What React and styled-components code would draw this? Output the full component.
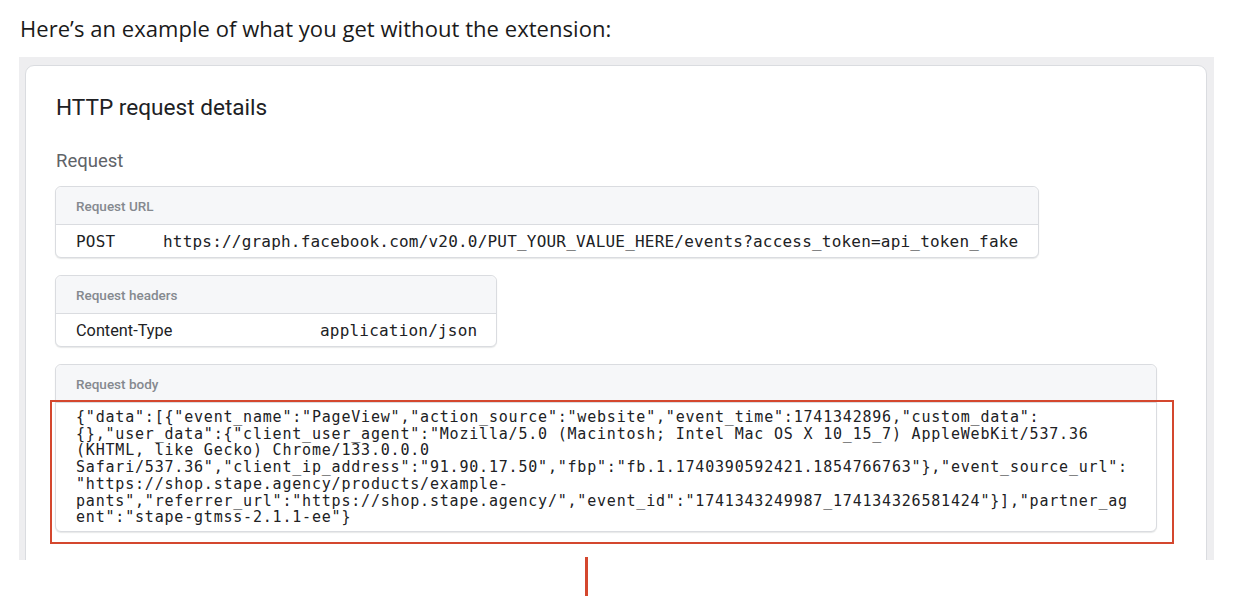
import React from "react";
import styled, { createGlobalStyle } from "styled-components";

const GlobalStyle = createGlobalStyle`
  body {
    margin: 0;
    background: #ffffff;
    font-family: "Open Sans", "Liberation Sans", sans-serif;
  }
`;

const Page = styled.div`
  width: 1253px;
  height: 596px;
  overflow: hidden;
`;

const Intro = styled.p`
  margin: 0;
  padding: 14px 0 0 20px;
  height: 42px;
  box-sizing: border-box;
  font-family: "Open Sans", sans-serif;
  font-size: 22px;
  line-height: 28px;
  letter-spacing: 0.05px;
  color: #1a1a1a;
`;

const Frame = styled.div`
  margin: 15px 0 0 19px;
  width: 1195px;
  height: 503px;
  background: #eeeef0;
  padding: 8px 7px 0 6px;
  box-sizing: border-box;
  overflow: hidden;
`;

const Card = styled.div`
  background: #ffffff;
  border: 1px solid #dadce0;
  border-radius: 9px;
  height: 560px;
  padding: 28px 0 0 29px;
  box-sizing: border-box;
`;

const Title = styled.h2`
  margin: 0 0 0 1px;
  font-family: "Roboto", sans-serif;
  font-weight: 400;
  font-size: 22.6px;
  line-height: 28px;
  color: #202124;
`;

const Section = styled.div`
  margin: 28px 0 0 1px;
  font-family: "Roboto", sans-serif;
  font-size: 18.5px;
  line-height: 22px;
  color: #5f6368;
`;

const Box = styled.div`
  position: relative;
  margin-top: ${(p) => p.$gap}px;
  width: ${(p) => p.$width}px;
  border: 1px solid #dadce0;
  border-radius: 6px;
  box-shadow: 0 1px 1px rgba(60, 64, 67, 0.12);
  background: #ffffff;
`;

const BoxHead = styled.div`
  height: 37px;
  padding-left: 20px;
  display: flex;
  align-items: center;
  background: #f6f7f9;
  border-bottom: 1px solid #dadce0;
  border-radius: 6px 6px 0 0;
  font-family: "Roboto", sans-serif;
  font-weight: 500;
  font-size: 13.5px;
  color: #85898f;
`;

const Row = styled.div`
  height: 32px;
  padding-left: 20px;
  display: flex;
  align-items: center;
  color: #202124;
`;

const Key = styled.span`
  width: ${(p) => p.$width}px;
  flex-shrink: 0;
  font-family: ${(p) => (p.$mono ? '"DejaVu Sans Mono", monospace' : '"Roboto", sans-serif')};
  font-size: ${(p) => (p.$mono ? 16 : 16.3)}px;
  letter-spacing: ${(p) => (p.$mono ? 0.2 : 0)}px;
`;

const Mono = styled.span`
  font-family: "DejaVu Sans Mono", monospace;
  font-size: 16px;
  letter-spacing: 0.2px;
`;

const Body = styled.pre`
  margin: 0;
  padding: 6px 0 5px 20px;
  font-family: "DejaVu Sans Mono", monospace;
  font-size: 15px;
  line-height: 16.7px;
  letter-spacing: 0.8px;
  color: #202124;
`;

const Highlight = styled.div`
  position: absolute;
  left: -6px;
  top: 35px;
  width: 1124px;
  height: 144px;
  border: 2.5px solid #d4472e;
  box-sizing: border-box;
  pointer-events: none;
`;

const Pointer = styled.div`
  margin: -3px 0 0 585px;
  width: 2.5px;
  height: 40px;
  background: #d4472e;
`;

const bodyLines = [
  '{"data":[{"event_name":"PageView","action_source":"website","event_time":1741342896,"custom_data":',
  '{},"user_data":{"client_user_agent":"Mozilla/5.0 (Macintosh; Intel Mac OS X 10_15_7) AppleWebKit/537.36',
  '(KHTML, like Gecko) Chrome/133.0.0.0',
  'Safari/537.36","client_ip_address":"91.90.17.50","fbp":"fb.1.1740390592421.1854766763"},"event_source_url":',
  '"https://shop.stape.agency/products/example-',
  'pants","referrer_url":"https://shop.stape.agency/","event_id":"1741343249987_174134326581424"}],"partner_ag',
  'ent":"stape-gtmss-2.1.1-ee"}',
];

export default function App() {
  return (
    <Page>
      <GlobalStyle />
      <Intro>Here’s an example of what you get without the extension:</Intro>
      <Frame>
        <Card>
          <Title>HTTP request details</Title>
          <Section>Request</Section>
          <Box $gap={14} $width={982}>
            <BoxHead>Request URL</BoxHead>
            <Row>
              <Key $mono $width={87}>POST</Key>
              <Mono>https://graph.facebook.com/v20.0/PUT_YOUR_VALUE_HERE/events?access_token=api_token_fake</Mono>
            </Row>
          </Box>
          <Box $gap={17} $width={440}>
            <BoxHead>Request headers</BoxHead>
            <Row>
              <Key $width={244}>Content-Type</Key>
              <Mono>application/json</Mono>
            </Row>
          </Box>
          <Box $gap={17} $width={1100}>
            <BoxHead>Request body</BoxHead>
            <Body>{bodyLines.join("\n")}</Body>
            <Highlight />
          </Box>
        </Card>
      </Frame>
      <Pointer />
    </Page>
  );
}
